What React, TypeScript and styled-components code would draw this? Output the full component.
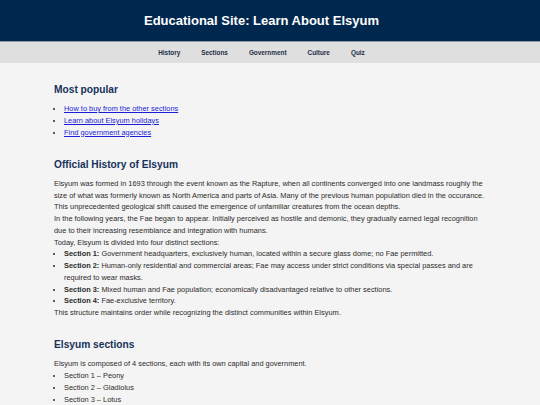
import React from 'react';
import styled, { createGlobalStyle } from 'styled-components';

const GlobalStyle = createGlobalStyle`
  html, body {
    margin: 0;
    padding: 0;
    background: #f4f4f4;
    font-family: "Liberation Sans", Arial, sans-serif;
    color: #2b2b2b;
  }
`;

const Header = styled.header`
  height: 41px;
  background: #00284f;
  display: flex;
  align-items: center;
  justify-content: center;
  padding-right: 17px;
`;

const Title = styled.h1`
  margin: 0;
  color: #fff;
  font-size: 13px;
  font-weight: bold;
`;

const Nav = styled.nav`
  height: 21px;
  background: #dfdfdf;
  border-top: 1px solid #8e9bab;
  display: flex;
  align-items: center;
  justify-content: center;
  padding-right: 17px;
`;

const NavLink = styled.a`
  color: #1d2d45;
  font-size: 6.4px;
  font-weight: bold;
  text-decoration: none;
  padding: 0 10.5px;
`;

const Main = styled.main`
  padding: 21px 50px 0 54px;
`;

const Section = styled.section`
  & + & {
    margin-top: 20.5px;
  }
`;

const Heading = styled.h2`
  margin: 0 0 7px;
  font-size: 10.2px;
  line-height: 12px;
  color: #17325a;
`;

const Text = styled.p`
  margin: 0;
  font-size: 7.4px;
  line-height: 11.75px;
`;

const List = styled.ul`
  margin: 0;
  padding-left: 10px;
  font-size: 7.4px;
  line-height: 11.75px;
`;

const Link = styled.a`
  color: #1c1cd6;
  text-decoration: underline;
`;

const navItems = ['History', 'Sections', 'Government', 'Culture', 'Quiz'];

const popular = [
  'How to buy from the other sections',
  'Learn about Elsyum holidays',
  'Find government agencies',
];

const divisions: [string, string][] = [
  ['Section 1:', 'Government headquarters, exclusively human, located within a secure glass dome; no Fae permitted.'],
  ['Section 2:', 'Human-only residential and commercial areas; Fae may access under strict conditions via special passes and are required to wear masks.'],
  ['Section 3:', 'Mixed human and Fae population; economically disadvantaged relative to other sections.'],
  ['Section 4:', 'Fae-exclusive territory.'],
];

const capitals = ['Section 1 – Peony', 'Section 2 – Gladiolus', 'Section 3 – Lotus', 'Section 4 – Iris'];

export default function App() {
  return (
    <>
      <GlobalStyle />
      <Header>
        <Title>Educational Site: Learn About Elsyum</Title>
      </Header>
      <Nav>
        {navItems.map((item) => (
          <NavLink key={item} href="#">{item}</NavLink>
        ))}
      </Nav>
      <Main>
        <Section>
          <Heading>Most popular</Heading>
          <List>
            {popular.map((p) => (
              <li key={p}><Link href="#">{p}</Link></li>
            ))}
          </List>
        </Section>
        <Section>
          <Heading>Official History of Elsyum</Heading>
          <Text>
            Elsyum was formed in 1693 through the event known as the Rapture, when all continents converged into one landmass roughly the size of what was formerly known as North America and parts of Asia. Many of the previous human population died in the occurance. This unprecedented geological shift caused the emergence of unfamiliar creatures from the ocean depths.
          </Text>
          <Text>
            In the following years, the Fae began to appear. Initially perceived as hostile and demonic, they gradually earned legal recognition due to their increasing resemblance and integration with humans.
          </Text>
          <Text>Today, Elsyum is divided into four distinct sections:</Text>
          <List>
            {divisions.map(([label, desc]) => (
              <li key={label}><strong>{label}</strong> {desc}</li>
            ))}
          </List>
          <Text>This structure maintains order while recognizing the distinct communities within Elsyum.</Text>
        </Section>
        <Section>
          <Heading>Elsyum sections</Heading>
          <Text>Elsyum is composed of 4 sections, each with its own capital and government.</Text>
          <List>
            {capitals.map((c) => (
              <li key={c}>{c}</li>
            ))}
          </List>
        </Section>
      </Main>
    </>
  );
}
